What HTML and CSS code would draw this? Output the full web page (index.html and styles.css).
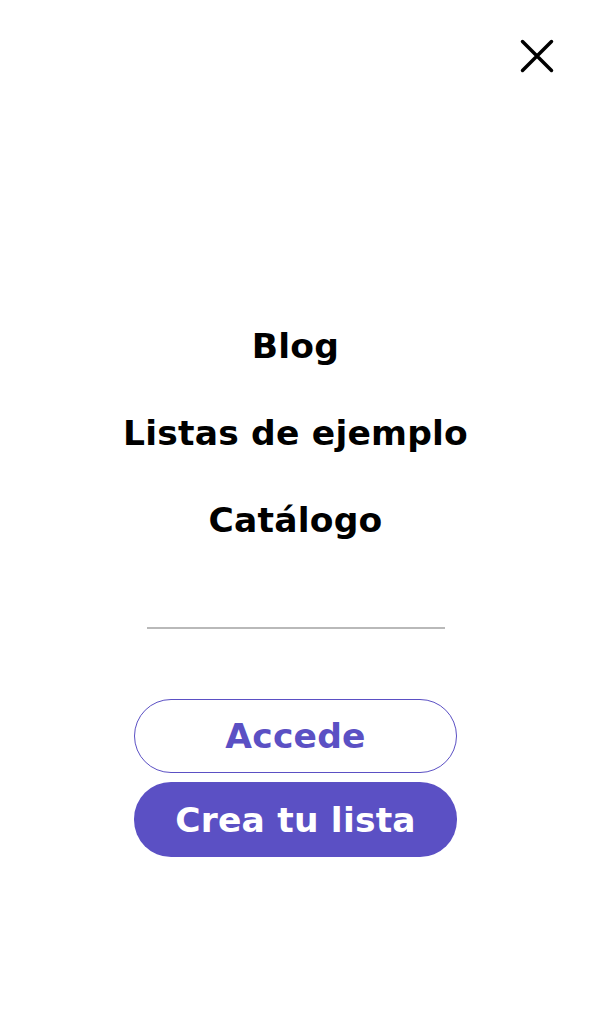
FILE: index.html
```html
<!DOCTYPE html>
<html lang="es">
<head>
<meta charset="utf-8">
<title>Menú</title>
<link rel="stylesheet" href="styles.css">
</head>
<body>

<div class="menu">
  <div class="menu-top">
    <button class="close-btn" aria-label="Cerrar">
      <svg width="34" height="34" viewBox="0 0 34 34">
        <path d="M2.5 2.5 L31.5 31.5 M31.5 2.5 L2.5 31.5" stroke="#000" stroke-width="3.5" stroke-linecap="round" fill="none"/>
      </svg>
    </button>
  </div>

  <nav class="menu-links">
    <a href="#">Blog</a>
    <a href="#">Listas de ejemplo</a>
    <a href="#">Catálogo</a>
  </nav>

  <div class="divider"></div>

  <div class="menu-actions">
    <a href="#" class="btn btn-outline">Accede</a>
    <a href="#" class="btn btn-fill">Crea tu lista</a>
  </div>
</div>

</body>
</html>
```

FILE: styles.css
```css
html, body {
  margin: 0;
  padding: 0;
  background: #fff;
  color: #000;
  font-family: "DejaVu Sans", "Liberation Sans", Arial, sans-serif;
}

.menu {
  width: 591px;
  min-height: 1024px;
  display: flex;
  flex-direction: column;
  align-items: center;
}

.menu-top {
  align-self: stretch;
  display: flex;
  justify-content: flex-end;
  padding: 39px 37px 0 0;
}

.close-btn {
  border: 0;
  background: none;
  padding: 0;
  width: 34px;
  height: 34px;
  display: block;
  cursor: pointer;
}
.close-btn svg {
  display: block;
}

.menu-links {
  margin-top: 251px;
  display: flex;
  flex-direction: column;
  align-items: center;
  gap: 43px;
}
.menu-links a {
  color: #000;
  text-decoration: none;
  font-weight: 700;
  font-size: 34.5px;
  line-height: 44px;
  letter-spacing: 0.2px;
}

.divider {
  margin-top: 85px;
  width: 298px;
  height: 2px;
  background: #b9b9b9;
}

.menu-actions {
  margin-top: 70px;
  display: flex;
  flex-direction: column;
  gap: 9px;
  width: 323px;
}

.btn {
  display: flex;
  align-items: center;
  justify-content: center;
  box-sizing: border-box;
  height: 74px;
  border-radius: 37px;
  font-weight: 700;
  font-size: 34.5px;
  letter-spacing: 0.2px;
  text-decoration: none;
}
.btn-outline {
  border: 1.5px solid #5b50c4;
  color: #5b50c4;
  background: #fff;
}
.btn-fill {
  height: 75px;
  background: #5b50c4;
  color: #fff;
}
```
